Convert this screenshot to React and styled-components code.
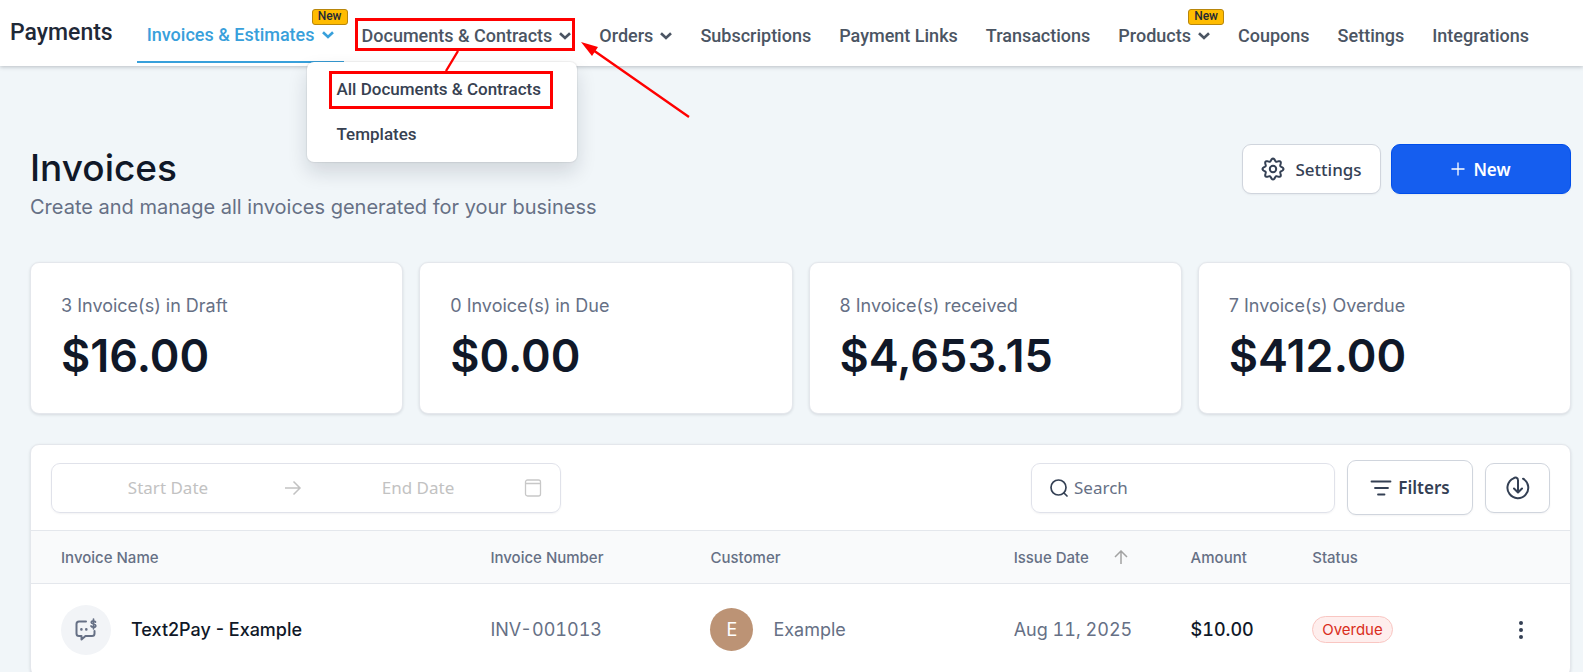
import React from 'react';
import styled, { createGlobalStyle, css } from 'styled-components';

const tabs = [
    { label: 'Invoices & Estimates', menu: true, isNew: true, active: true },
    { label: 'Documents & Contracts', menu: true, open: true },
    { label: 'Orders', menu: true },
    { label: 'Subscriptions' },
    { label: 'Payment Links' },
    { label: 'Transactions' },
    { label: 'Products', menu: true, isNew: true },
    { label: 'Coupons' },
    { label: 'Settings' },
    { label: 'Integrations' },
];

const stats = [
    { label: '3 Invoice(s) in Draft', amount: '$16.00' },
    { label: '0 Invoice(s) in Due', amount: '$0.00' },
    { label: '8 Invoice(s) received', amount: '$4,653.15' },
    { label: '7 Invoice(s) Overdue', amount: '$412.00' },
];

const invoices = [
    { name: 'Text2Pay - Example', number: 'INV-001013', customer: 'Example', date: 'Aug 11, 2025', amount: '$10.00', status: 'Overdue' },
];

const App = () => (
    <>
        <GlobalStyle />
        <NavBar />
        <Main>
            <PageHeader>
                <div>
                    <Title>Invoices</Title>
                    <Subtitle>Create and manage all invoices generated for your business</Subtitle>
                </div>
                <Actions>
                    <SettingsButton type="button"><GearIcon />Settings</SettingsButton>
                    <NewButton type="button"><PlusIcon />New</NewButton>
                </Actions>
            </PageHeader>
            <Stats>
                {stats.map((stat) => (
                    <StatCard key={stat.label}>
                        <StatLabel>{stat.label}</StatLabel>
                        <StatAmount>{stat.amount}</StatAmount>
                    </StatCard>
                ))}
            </Stats>
            <Panel>
                <Toolbar />
                <InvoiceTable />
            </Panel>
        </Main>
    </>
);

const NavBar = () => (
    <Nav>
        <Brand>Payments</Brand>
        {tabs.map((tab) => (
            <TabItem key={tab.label}>
                <Tab href="#" $active={tab.active}>
                    {tab.label}
                    {tab.menu && <Chevron />}
                </Tab>
                {tab.isNew && <NewTag>New</NewTag>}
                {tab.open && <DocumentsMenu />}
            </TabItem>
        ))}
    </Nav>
);

const DocumentsMenu = () => (
    <>
        <TabOutline />
        <Menu>
            <MenuItem href="#">All Documents &amp; Contracts<ItemOutline /></MenuItem>
            <MenuItem href="#">Templates</MenuItem>
        </Menu>
        <Arrows width="250" height="74" viewBox="0 0 250 74" aria-hidden="true">
            <path d="M98 6 86 26M329 72 233 5" stroke="#f00" strokeWidth="2.4" fill="none" />
            <path d="M221-3 238 2 232 11z" fill="#f00" />
        </Arrows>
    </>
);

const Toolbar = () => (
    <Bar>
        <DateRange>
            <DateInput type="text" placeholder="Start Date" aria-label="Start Date" />
            <RangeArrow />
            <DateInput type="text" placeholder="End Date" aria-label="End Date" />
            <CalendarSlot><CalendarIcon /></CalendarSlot>
        </DateRange>
        <Tools>
            <SearchBox>
                <SearchIcon />
                <SearchInput type="search" placeholder="Search" aria-label="Search" />
            </SearchBox>
            <FilterButton type="button"><FilterIcon />Filters</FilterButton>
            <DownloadButton type="button" aria-label="Download"><DownloadIcon /></DownloadButton>
        </Tools>
    </Bar>
);

const InvoiceTable = () => (
    <Table>
        <colgroup>
            <Col $share={279} />
            <Col $share={143} />
            <Col $share={197} />
            <Col $share={115} />
            <Col $share={79} />
            <Col $share={131} />
            <Col $share={56} />
        </colgroup>
        <thead>
            <tr>
                <Th scope="col">Invoice Name</Th>
                <Th scope="col">Invoice Number</Th>
                <Th scope="col">Customer</Th>
                <Th scope="col"><SortLabel>Issue Date<SortIcon /></SortLabel></Th>
                <Th scope="col">Amount</Th>
                <Th scope="col">Status</Th>
                <Th aria-label="Actions" />
            </tr>
        </thead>
        <tbody>
            {invoices.map((inv) => (
                <tr key={inv.number}>
                    <Td $strong>
                        <Cell><TypeBadge><TextPayIcon /></TypeBadge>{inv.name}</Cell>
                    </Td>
                    <Td $numeric>{inv.number}</Td>
                    <Td><Cell><Avatar>{inv.customer[0]}</Avatar>{inv.customer}</Cell></Td>
                    <Td $numeric>{inv.date}</Td>
                    <Td $numeric $strong>{inv.amount}</Td>
                    <Td><Status>{inv.status}</Status></Td>
                    <Td><MoreButton type="button" aria-label="More"><DotsIcon /></MoreButton></Td>
                </tr>
            ))}
        </tbody>
    </Table>
);

const Chevron = () => (
    <svg width="12" height="8" viewBox="0 0 12 8" fill="none" stroke="currentColor" strokeWidth="2.6" aria-hidden="true">
        <path d="M1 1.2 6 6l5-4.8" />
    </svg>
);

// outline with eight rounded teeth, the first one pointing up
const gearPath = () => {
    const points = [];
    for (let deg = 0; deg < 360; deg += 3) {
        const a = (deg * Math.PI) / 180;
        const r = 9.2 + 1.3 * Math.cos(8 * a);
        points.push(`${(12 + r * Math.sin(a)).toFixed(2)} ${(12 - r * Math.cos(a)).toFixed(2)}`);
    }
    return `M${points.join('L')}z`;
};

const GearIcon = () => (
    <svg width="24" height="24" viewBox="0 0 24 24" fill="none" stroke="currentColor" strokeWidth="2" strokeLinejoin="round" aria-hidden="true">
        <path d={gearPath()} />
        <circle cx="12" cy="12" r="3.2" />
    </svg>
);

const PlusIcon = () => (
    <svg width="14" height="14" viewBox="0 0 14 14" stroke="currentColor" strokeWidth="1.3" aria-hidden="true">
        <path d="M7 .5v13M.5 7h13" />
    </svg>
);

const RangeArrow = () => (
    <svg width="18" height="16" viewBox="0 0 18 16" fill="none" stroke="#c2c2c2" strokeWidth="1.5" aria-hidden="true">
        <path d="M1 8h15M9.5 1.5 16 8l-6.5 6.5" />
    </svg>
);

const CalendarIcon = () => (
    <svg width="18" height="18" viewBox="0 0 18 18" fill="none" stroke="#c8c8c8" strokeWidth="1.3" aria-hidden="true">
        <rect x="1.5" y="1" width="15" height="16" rx="2" />
        <path d="M1.5 4.5h15" />
    </svg>
);

const SearchIcon = () => (
    <svg width="18" height="18" viewBox="0 0 18 18" fill="none" stroke="#344054" strokeWidth="1.7" strokeLinecap="round" aria-hidden="true">
        <circle cx="8.5" cy="8.5" r="7.5" />
        <path d="m14 14 3 3" />
    </svg>
);

const FilterIcon = () => (
    <svg width="22" height="18" viewBox="0 0 22 18" stroke="currentColor" strokeWidth="1.8" strokeLinecap="round" aria-hidden="true">
        <path d="M1.5 2.5h19M5 9h13M8 15.5h6.5" />
    </svg>
);

const DownloadIcon = () => (
    <svg width="24" height="24" viewBox="0 0 24 24" fill="none" stroke="currentColor" strokeWidth="2" strokeLinecap="round" strokeLinejoin="round" aria-hidden="true">
        <path d="M12 16V4.5C12 1.500 9.500 1 7.500 2.300A10.400 10.400 0 1 0 17 2.700M8 12.500l4 4 4-4" />
    </svg>
);

const SortIcon = () => (
    <svg width="14" height="14" viewBox="0 0 14 14" fill="none" stroke="#a3a3a3" strokeWidth="1.5" aria-hidden="true">
        <path d="M7 14V1.5M1 7l6-6 6 6" />
    </svg>
);

const TextPayIcon = () => (
    <svg width="24" height="24" viewBox="0 0 24 24" fill="none" stroke="currentColor" strokeWidth="2" strokeLinecap="round" strokeLinejoin="round" aria-hidden="true">
        <path d="M12 3.5H5A2.5 2.5 0 0 0 2.5 6v9.5A2.5 2.5 0 0 0 5 18h2.500v3.500L11.500 18H18a2.500 2.500 0 0 0 2.500-2.500V13" />
        <path d="M21.5 4c-.8-1.600-4.300-1.500-4.300.3 0 2.200 4.600 1.200 4.600 3.400 0 1.900-3.900 2-4.800.3M19.500 1v9.800" strokeWidth="1.7" />
        <path d="M7.4 11.4h.01M12.3 11.4h.01" strokeWidth="2.6" />
    </svg>
);

const DotsIcon = () => (
    <svg width="6" height="20" viewBox="0 0 6 20" fill="currentColor" aria-hidden="true">
        <circle cx="3" cy="3" r="2" />
        <circle cx="3" cy="10" r="2" />
        <circle cx="3" cy="17" r="2" />
    </svg>
);

const GlobalStyle = createGlobalStyle`
    *, *::before, *::after {
        box-sizing: border-box;
    }

    body {
        margin: 0;
        min-height: 100vh;
        overflow: hidden;
        background: #f1f6f9;
        color: #667085;
        font-family: Inter, sans-serif;
    }

    button, input {
        font: inherit;
    }

    svg {
        flex: none;
    }
`;

const Nav = styled.nav`
    position: relative;
    z-index: 1;
    display: flex;
    align-items: flex-start;
    height: 66px;
    padding-left: 10px;
    background: #fff;
    box-shadow: 0 1px 4px rgba(16, 24, 40, 0.25);
    font-family: Roboto, sans-serif;
    font-weight: 500;
    white-space: nowrap;
`;

const Brand = styled.div`
    margin-right: 20px;
    color: #1f2937;
    font-size: 23px;
    line-height: 66px;
`;

const TabItem = styled.div`
    position: relative;
`;

const Tab = styled.a`
    display: flex;
    align-items: center;
    gap: 7px;
    height: 63px;
    padding: 8px 14px 0;
    color: #4b5563;
    font-size: 18px;
    text-decoration: none;

    ${(props) => props.$active && css`
        margin: 0 4px;
        padding: 8px 10px 0;
        border-bottom: 2px solid #38a0db;
        color: #38a0db;
    `}
`;

const NewTag = styled.span`
    position: absolute;
    top: 9px;
    right: 0;
    height: 16px;
    padding: 0 5px;
    border: 1px solid #b8860b;
    border-radius: 3px;
    background: #ffbc00;
    color: #1f2937;
    font-size: 12px;
    line-height: 13px;
`;

const Menu = styled.div`
    position: absolute;
    top: 62px;
    left: -41px;
    width: 270px;
    padding: 5px 0;
    border-radius: 7px;
    background: #fff;
    box-shadow: 0 0 1px 1px rgba(0, 0, 0, 0.06), 0 10px 20px rgba(16, 24, 40, 0.14);
`;

const MenuItem = styled.a`
    position: relative;
    display: block;
    padding: 0 30px;
    color: #374151;
    font-size: 17px;
    line-height: 45px;
    text-decoration: none;
`;

const TabOutline = styled.span`
    position: absolute;
    top: 18px;
    left: 7px;
    right: 10px;
    height: 33px;
    border: 3px solid #f00;
`;

const ItemOutline = styled.span`
    position: absolute;
    inset: 4px 24px 3px 22px;
    border: 3px solid #f00;
`;

const Arrows = styled.svg`
    position: absolute;
    top: 45px;
    left: 12px;
    overflow: visible;
    pointer-events: none;
`;

const Main = styled.main`
    padding: 78px 12px 0 30px;
`;

const PageHeader = styled.header`
    display: flex;
    justify-content: space-between;
    align-items: flex-start;
    margin-bottom: 40px;
`;

const Title = styled.h1`
    margin: 0;
    color: #101828;
    font-size: 37px;
    font-weight: 500;
    line-height: 48px;
`;

const Subtitle = styled.p`
    margin: 0;
    font-size: 20px;
    line-height: 30px;
`;

const Actions = styled.div`
    display: flex;
    gap: 10px;
`;

const Button = styled.button`
    display: flex;
    justify-content: center;
    align-items: center;
    height: 50px;
    padding: 0;
    border: 1px solid #d0d5dd;
    border-radius: 9px;
    background: #fff;
    box-shadow: 0 1px 2px rgba(16, 24, 40, 0.05);
    color: #344054;
    font-family: "Noto Sans", sans-serif;
    font-size: 17px;
    font-weight: 500;
`;

const SettingsButton = styled(Button)`
    gap: 10px;
    width: 139px;
`;

const NewButton = styled(Button)`
    gap: 8px;
    width: 180px;
    border-color: #004eeb;
    background: #155eef;
    color: #fff;
    font-weight: 600;
`;

const Stats = styled.section`
    display: grid;
    grid-template-columns: repeat(4, 1fr);
    gap: 16px;
    margin-bottom: 30px;
`;

const StatCard = styled.div`
    padding: 29px 30px 28px;
    border: 1px solid #e4e7ec;
    border-radius: 9px;
    background: #fff;
    box-shadow: 0 1px 3px rgba(16, 24, 40, 0.12);
`;

const StatLabel = styled.div`
    font-size: 18px;
    line-height: 28px;
`;

const StatAmount = styled.div`
    margin-top: 7px;
    color: #101828;
    font-size: 45px;
    font-weight: 600;
    line-height: 58px;
`;

const Panel = styled.section`
    overflow: hidden;
    border: 1px solid #e4e7ec;
    border-radius: 9px;
    background: #fff;
    box-shadow: 0 1px 3px rgba(16, 24, 40, 0.12);
`;

const Bar = styled.div`
    display: flex;
    justify-content: space-between;
    align-items: center;
    height: 85px;
    padding: 0 20px;
    font-family: "Noto Sans", sans-serif;
    font-size: 17px;
`;

const Field = styled.div`
    display: flex;
    align-items: center;
    height: 50px;
    padding: 0 18px;
    border: 1px solid #e0e2ea;
    border-radius: 9px;
    box-shadow: 0 1px 2px rgba(16, 24, 40, 0.05);
`;

const DateRange = styled(Field)`
    position: relative;
    width: 510px;
    padding: 0 26px 0 0;
`;

const CalendarSlot = styled.span`
    position: absolute;
    right: 18px;
    display: flex;
`;

const TextInput = styled.input`
    min-width: 0;
    flex: 1;
    padding: 0;
    border: 0;
    outline: 0;
    background: none;
    color: #344054;
`;

const DateInput = styled(TextInput)`
    text-align: center;

    &::placeholder {
        color: #c2c2c2;
    }
`;

const Tools = styled.div`
    display: flex;
    align-items: center;
    gap: 12px;
`;

const SearchBox = styled(Field)`
    gap: 6px;
    width: 304px;
`;

const SearchInput = styled(TextInput)`
    &::placeholder {
        color: #667085;
    }
`;

const FilterButton = styled(Button)`
    gap: 6px;
    width: 126px;
    height: 55px;
    font-weight: 600;
`;

const DownloadButton = styled(Button)`
    width: 65px;
`;

const Table = styled.table`
    width: 100%;
    table-layout: fixed;
    border-collapse: collapse;
`;

const Col = styled.col`
    width: ${(props) => props.$share / 10}%;
`;

const Th = styled.th`
    height: 53px;
    padding: 0 0 0 30px;
    border-top: 1px solid #e4e7ec;
    border-bottom: 1px solid #e4e7ec;
    background: #f9fafb;
    font-size: 15px;
    font-weight: 500;
    text-align: left;
`;

const SortLabel = styled.span`
    display: flex;
    align-items: center;
    gap: 25px;
`;

const Td = styled.td`
    height: 92px;
    padding: 0 0 0 30px;
    color: ${(props) => (props.$strong ? '#101828' : '#667085')};
    font-size: 18px;
    font-weight: ${(props) => (props.$strong ? 500 : 400)};
    font-variant-numeric: ${(props) => (props.$numeric ? 'tabular-nums' : 'normal')};
    white-space: nowrap;
`;

const Cell = styled.div`
    display: flex;
    align-items: center;
    gap: 20px;
`;

const TypeBadge = styled.span`
    display: flex;
    justify-content: center;
    align-items: center;
    width: 50px;
    height: 50px;
    border-radius: 50%;
    background: #f2f4f7;
    color: #667085;
`;

const Avatar = styled.span`
    width: 43px;
    height: 43px;
    border-radius: 50%;
    background: #bc9375;
    color: #fff;
    line-height: 43px;
    text-align: center;
`;

const Status = styled.span`
    display: inline-block;
    padding: 0 9px;
    border: 1px solid #f9c6c2;
    border-radius: 14px;
    background: #feeeed;
    color: #d92d20;
    font-size: 15px;
    line-height: 25px;
`;

const MoreButton = styled.button`
    display: flex;
    padding: 4px;
    border: 0;
    background: none;
    color: #344054;
`;

export default App;
